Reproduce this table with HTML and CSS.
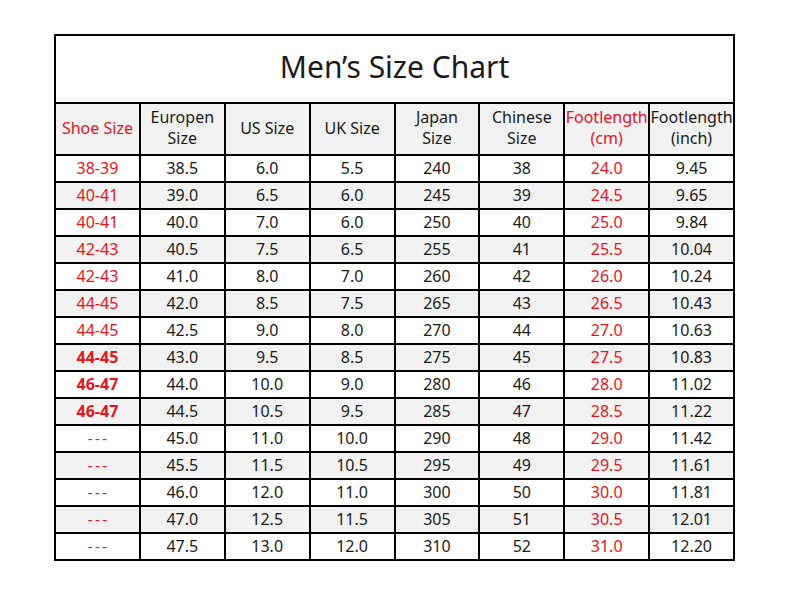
FILE: index.html
```html
<!DOCTYPE html>
<html>
<head>
<meta charset="utf-8">
<link rel="stylesheet" href="styles.css">
</head>
<body>
<div class="page">
<table class="chart">
<colgroup>
<col class="c"><col class="c"><col class="c"><col class="c"><col class="c"><col class="c"><col class="c"><col class="c">
</colgroup>
<tr class="title-row"><td colspan="8" class="title">Men’s Size Chart</td></tr>
<tr class="head">
<td class="red">Shoe Size</td>
<td>Europen<br>Size</td>
<td>US Size</td>
<td>UK Size</td>
<td>Japan<br>Size</td>
<td>Chinese<br>Size</td>
<td class="red">Footlength<br>(cm)</td>
<td>Footlength<br>(inch)</td>
</tr>
<tr><td class="red">38-39</td><td>38.5</td><td>6.0</td><td>5.5</td><td>240</td><td>38</td><td class="red">24.0</td><td>9.45</td></tr>
<tr class="alt"><td class="red">40-41</td><td>39.0</td><td>6.5</td><td>6.0</td><td>245</td><td>39</td><td class="red">24.5</td><td>9.65</td></tr>
<tr><td class="red">40-41</td><td>40.0</td><td>7.0</td><td>6.0</td><td>250</td><td>40</td><td class="red">25.0</td><td>9.84</td></tr>
<tr class="alt"><td class="red">42-43</td><td>40.5</td><td>7.5</td><td>6.5</td><td>255</td><td>41</td><td class="red">25.5</td><td>10.04</td></tr>
<tr><td class="red">42-43</td><td>41.0</td><td>8.0</td><td>7.0</td><td>260</td><td>42</td><td class="red">26.0</td><td>10.24</td></tr>
<tr class="alt"><td class="red">44-45</td><td>42.0</td><td>8.5</td><td>7.5</td><td>265</td><td>43</td><td class="red">26.5</td><td>10.43</td></tr>
<tr><td class="red">44-45</td><td>42.5</td><td>9.0</td><td>8.0</td><td>270</td><td>44</td><td class="red">27.0</td><td>10.63</td></tr>
<tr class="alt"><td class="red bold">44-45</td><td>43.0</td><td>9.5</td><td>8.5</td><td>275</td><td>45</td><td class="red">27.5</td><td>10.83</td></tr>
<tr><td class="red bold">46-47</td><td>44.0</td><td>10.0</td><td>9.0</td><td>280</td><td>46</td><td class="red">28.0</td><td>11.02</td></tr>
<tr class="alt"><td class="red bold">46-47</td><td>44.5</td><td>10.5</td><td>9.5</td><td>285</td><td>47</td><td class="red">28.5</td><td>11.22</td></tr>
<tr><td class="red dash">---</td><td>45.0</td><td>11.0</td><td>10.0</td><td>290</td><td>48</td><td class="red">29.0</td><td>11.42</td></tr>
<tr class="alt"><td class="red dash">---</td><td>45.5</td><td>11.5</td><td>10.5</td><td>295</td><td>49</td><td class="red">29.5</td><td>11.61</td></tr>
<tr><td class="red dash">---</td><td>46.0</td><td>12.0</td><td>11.0</td><td>300</td><td>50</td><td class="red">30.0</td><td>11.81</td></tr>
<tr class="alt"><td class="red dash">---</td><td>47.0</td><td>12.5</td><td>11.5</td><td>305</td><td>51</td><td class="red">30.5</td><td>12.01</td></tr>
<tr><td class="red dash">---</td><td>47.5</td><td>13.0</td><td>12.0</td><td>310</td><td>52</td><td class="red">31.0</td><td>12.20</td></tr>
</table>
</div>
</body>
</html>
```
FILE: styles.css
```css
html, body {
  margin: 0;
  padding: 0;
  background: #fff;
}
.page {
  padding: 34px 0 0 54px;
}
.chart {
  border-collapse: collapse;
  table-layout: fixed;
  width: 681px;
  font-family: "Noto Sans", "Open Sans", sans-serif;
  font-size: 16px;
  color: #1a1a1a;
}
.chart td {
  border: 2px solid #000;
  text-align: center;
  vertical-align: middle;
  padding: 0 0 1px;
  height: 24px;
  line-height: 20px;
  white-space: nowrap;
}
.chart .title-row td {
  height: 61px;
  font-size: 30px;
  line-height: 36px;
  background: #fff;
  padding: 0 0 5px;
}
.chart .head td {
  height: 48px;
  background: #f2f2f2;
  line-height: 21px;
  padding: 0 0 2px;
}
.chart tr.alt td {
  background: #f2f2f2;
}
.red {
  color: #e8141c;
}
.bold {
  font-weight: 700;
}
.chart td.dash {
  font-size: 15px;
  letter-spacing: 2.5px;
  text-indent: 2.5px;
}
```
